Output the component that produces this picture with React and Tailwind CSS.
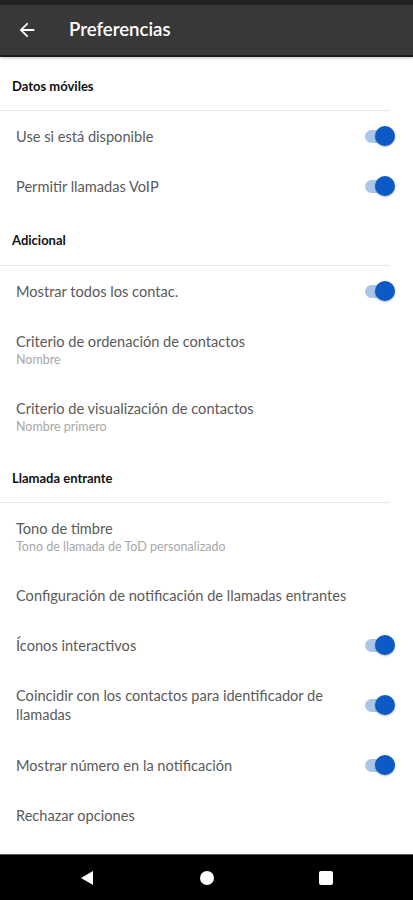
// App.jsx
import React from "react";

const sections = [
    {
        title: "Datos móviles",
        head: "h-[53px] pb-[16px]",
        items: [
            { label: "Use si está disponible", toggle: true },
            { label: "Permitir llamadas VoIP", toggle: true },
        ],
    },
    {
        title: "Adicional",
        head: "h-[54px] pb-[17px]",
        items: [
            { label: "Mostrar todos los contac.", toggle: true },
            { label: "Criterio de ordenación de contactos", sub: "Nombre" },
            {
                label: "Criterio de visualización de contactos",
                sub: "Nombre primero",
            },
        ],
    },
    {
        title: "Llamada entrante",
        head: "h-[52px] pb-[16px]",
        items: [
            {
                label: "Tono de timbre",
                sub: "Tono de llamada de ToD personalizado",
            },
            { label: "Configuración de notificación de llamadas entrantes" },
            { label: "Íconos interactivos", toggle: true },
            {
                label: "Coincidir con los contactos para identificador de llamadas",
                toggle: true,
                tall: true,
            },
            { label: "Mostrar número en la notificación", toggle: true },
            { label: "Rechazar opciones" },
        ],
    },
];

const Toggle = () => (
    <div className="relative shrink-0 w-[30px] h-[20px] flex items-center">
        <div className="w-[26px] h-[13px] rounded-full bg-[#a9c7ea]" />
        <div className="absolute right-0 top-0 w-[20px] h-[20px] rounded-full bg-[#0b5ac6] shadow-[0_1px_2px_rgba(0,0,0,0.3)]" />
    </div>
);

const Row = ({ item }) => {
    let height = "h-[50px]";
    if (item.sub) height = "h-[67px]";
    if (item.tall) height = "h-[70px]";
    return (
        <div className={`flex items-center justify-between pl-4 pr-[18px] ${height}`}>
            <div className="flex flex-col pr-8">
                <span className="text-[14.6px] leading-[19px] text-[#5a5a5a]">
                    {item.label}
                </span>
                {item.sub && (
                    <span className="text-[12.5px] leading-[17px] text-[#a8a8a8]">
                        {item.sub}
                    </span>
                )}
            </div>
            {item.toggle && <Toggle />}
        </div>
    );
};

const App = () => {
    return (
        <div
            className="w-[413px] h-[900px] flex flex-col bg-white overflow-hidden"
            style={{ fontFamily: "Lato, 'Open Sans', sans-serif" }}
        >
            {/* Header */}
            <div className="h-[5px] bg-[#222222]" />
            <div className="h-[52px] flex items-center bg-[#383838] border-b-2 border-[#1c1c1c] shadow-[0_1px_3px_rgba(0,0,0,0.25)]">
                <svg
                    viewBox="0 0 24 24"
                    className="w-[22px] h-[22px] ml-[16px] fill-white"
                >
                    <path d="M20 11H7.83l5.59-5.59L12 4l-8 8 8 8 1.41-1.41L7.83 13H20v-2z" />
                </svg>
                <span className="ml-[31px] text-[18.6px] font-semibold text-white">
                    Preferencias
                </span>
            </div>

            {/* List */}
            <div className="flex-1 flex flex-col">
                {sections.map((section) => (
                    <div key={section.title}>
                        <div className={`flex items-end pl-3 ${section.head}`}>
                            <span className="text-[13px] leading-[16px] font-bold text-[#111111]">
                                {section.title}
                            </span>
                        </div>
                        <div className="h-px w-[390px] bg-[#e6e6e6]" />
                        {section.items.map((item) => (
                            <Row key={item.label} item={item} />
                        ))}
                    </div>
                ))}
            </div>

            {/* Navigation bar */}
            <div className="h-[46px] flex items-center justify-between px-[80px] bg-black border-t border-[#555555]">
                <svg viewBox="0 0 14 16" className="w-[14px] h-[16px] fill-white">
                    <path d="M13 1 L1 8 L13 15 Z" />
                </svg>
                <div className="w-[14px] h-[14px] rounded-full bg-white" />
                <div className="w-[14px] h-[14px] rounded-[2px] bg-white" />
            </div>
        </div>
    );
};

export default App;
